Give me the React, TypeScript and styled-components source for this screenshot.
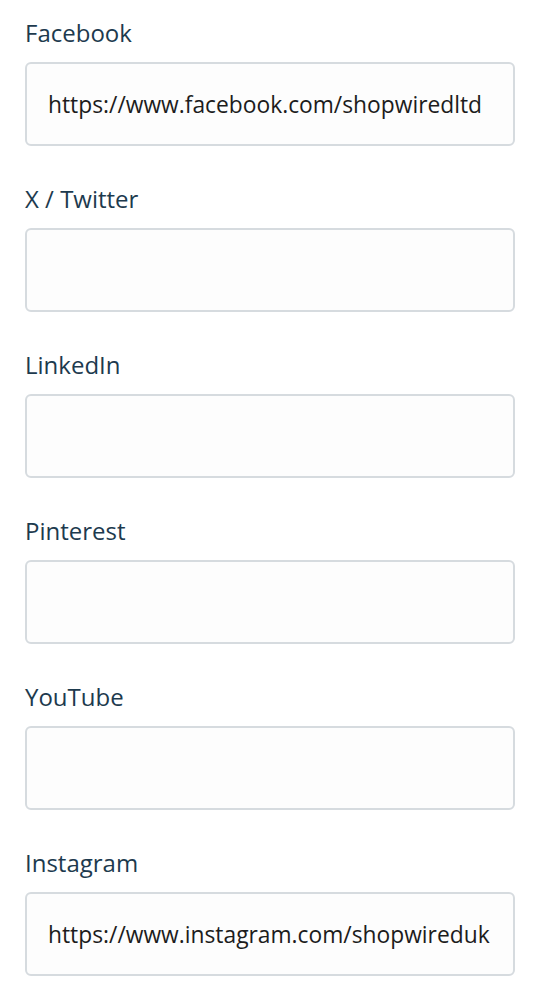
import React from 'react';
import styled, { createGlobalStyle } from 'styled-components';

const GlobalStyle = createGlobalStyle`
  body {
    margin: 0;
    background: #ffffff;
    font-family: "Open Sans", Lato, sans-serif;
  }
`;

const Form = styled.form`
  display: flex;
  flex-direction: column;
  gap: 40px;
  padding: 20px 21px 0 25px;
`;

const Field = styled.div`
  display: flex;
  flex-direction: column;
  gap: 16px;
`;

const Label = styled.label`
  font-size: 24px;
  line-height: 26px;
  color: #1d3a4e;
`;

const Input = styled.input`
  box-sizing: border-box;
  width: 100%;
  height: 84px;
  padding: 0 21px;
  border: 2px solid #d6dbdf;
  border-radius: 6px;
  background: #fdfdfd;
  font-family: inherit;
  font-size: 22.8px;
  color: #1c1c1c;
  outline: none;
`;

const fields = [
  { name: 'facebook', label: 'Facebook', value: 'https://www.facebook.com/shopwiredltd' },
  { name: 'twitter', label: 'X / Twitter', value: '' },
  { name: 'linkedin', label: 'LinkedIn', value: '' },
  { name: 'pinterest', label: 'Pinterest', value: '' },
  { name: 'youtube', label: 'YouTube', value: '' },
  { name: 'instagram', label: 'Instagram', value: 'https://www.instagram.com/shopwireduk' },
];

export default function App() {
  return (
    <>
      <GlobalStyle />
      <Form>
        {fields.map(f => (
          <Field key={f.name}>
            <Label htmlFor={f.name}>{f.label}</Label>
            <Input id={f.name} type="text" defaultValue={f.value} />
          </Field>
        ))}
      </Form>
    </>
  );
}
